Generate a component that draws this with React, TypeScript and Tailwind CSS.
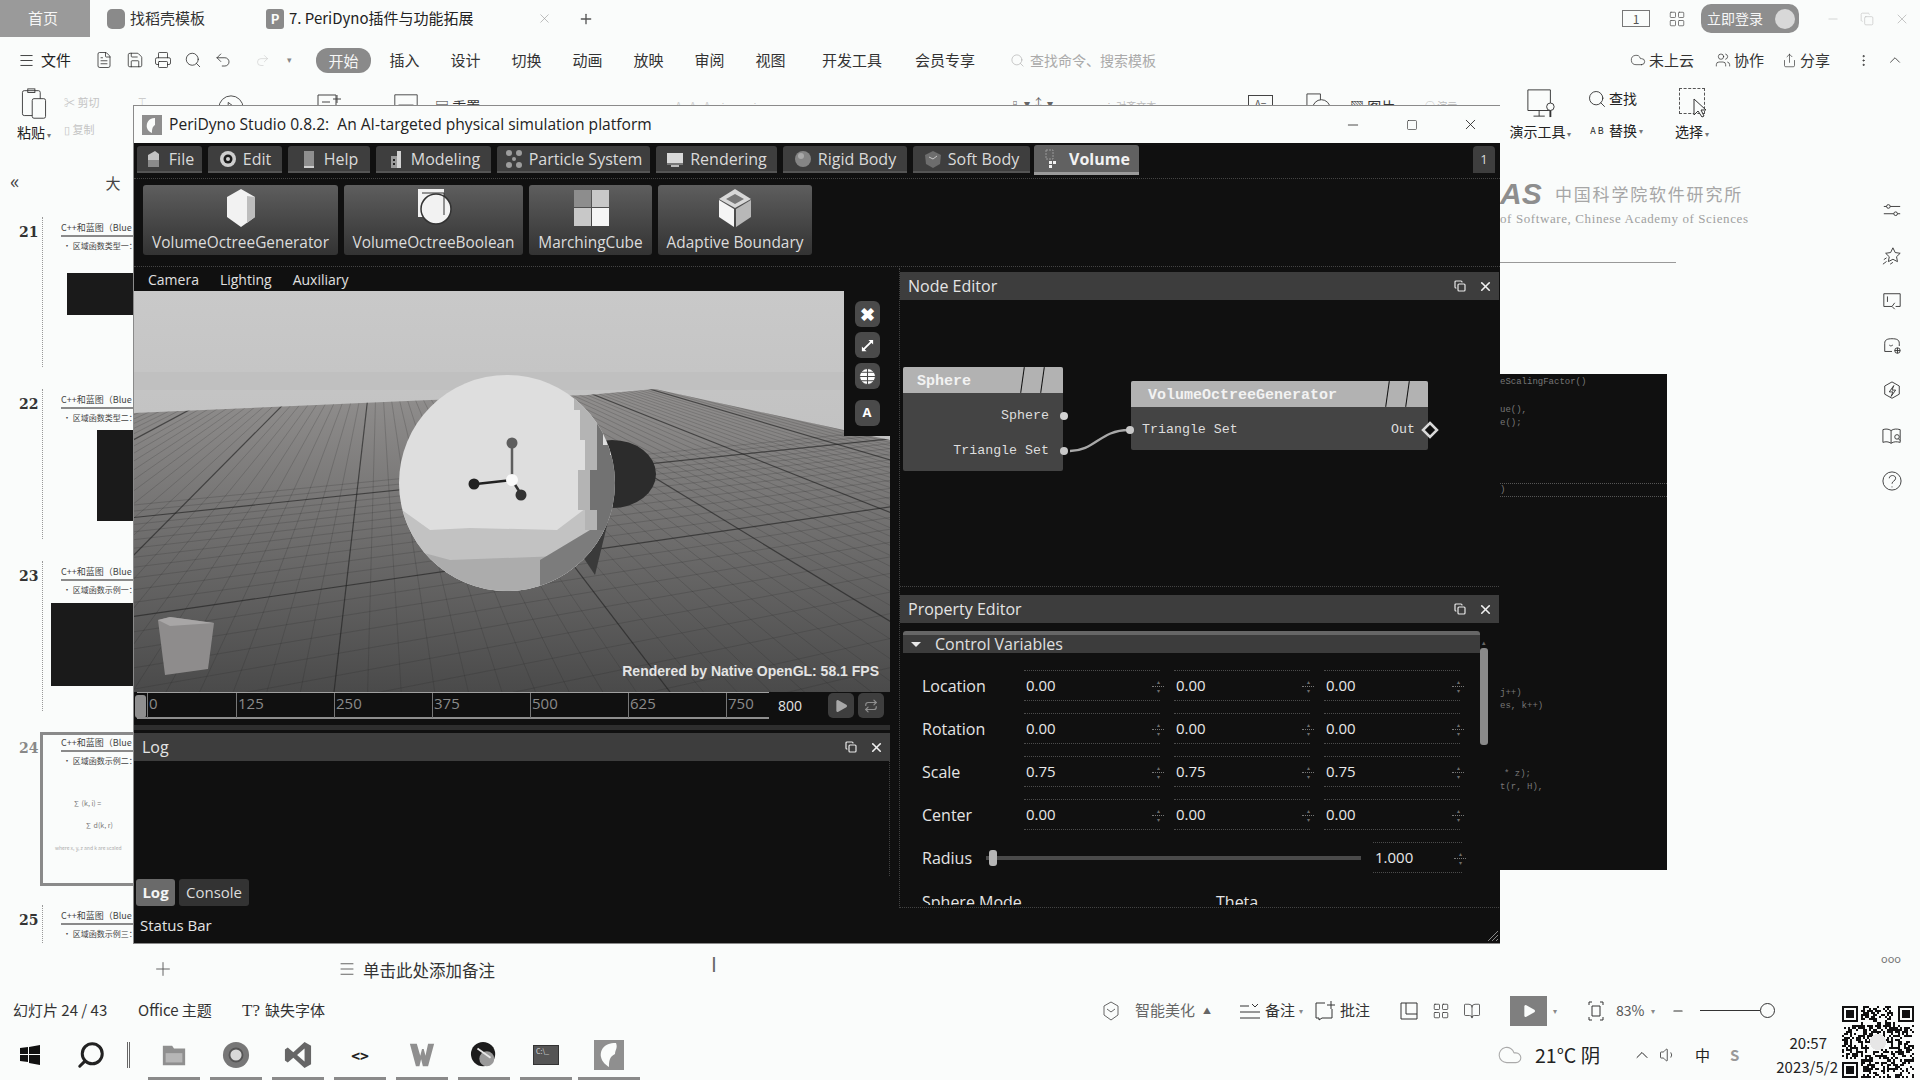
import { useMemo } from "react";
import {
  BookOpen, ChevronUp, CircleHelp, Cloud, Copy, FileText, LayoutGrid, Menu, Minus, MoreVertical,
  Play, Plus, Printer, Repeat, Save, Search, Share, Square, Undo2, Users, Volume1, X,
} from "lucide-react";

const menuTabs = [
  { label: "插入", w: "w-[61px]" },
  { label: "设计", w: "w-[61px]" },
  { label: "切换", w: "w-[61px]" },
  { label: "动画", w: "w-[61px]" },
  { label: "放映", w: "w-[61px]" },
  { label: "审阅", w: "w-[61px]" },
  { label: "视图", w: "w-[61px]" },
  { label: "开发工具", w: "w-[102px]" },
  { label: "会员专享", w: "w-[84px]" },
];

const slides = [
  { n: 21, sub: "• 区域函数类型一：K", block: "ml-[4px] w-[67px] h-[42px] mt-[22px]" },
  { n: 22, sub: "• 区域函数类型二：L", block: "ml-[34px] w-[37px] h-[91px] mt-[7px]" },
  { n: 23, sub: "• 区域函数示例一：K", block: "ml-[-12px] w-[83px] h-[83px] mt-[8px]" },
];

// 3D view: ground grid generated from the two vanishing points read off the picture
const VPA = { x: 378, y: 309 };
const VPB = { x: 2560, y: 265 };

function gridLines() {
  const lines: { d: string; major: boolean }[] = [];
  for (let k = -40; k <= 60; k++) {
    const bx = 334 + k * 33.6;
    const t = (1400 - VPA.y) / (692 - VPA.y);
    const x = VPA.x + (bx - VPA.x) * t;
    lines.push({ d: `M${VPA.x} ${VPA.y}L${x} 1400`, major: k % 10 === 0 });
  }
  for (let k = -12; k <= 36; k++) {
    const inv = 0.00329 - 0.000159 * k;
    const y = 313 + 1 / inv;
    lines.push({ d: `M${VPB.x} ${VPB.y}L0 ${y + (130 / 2430) * (y - VPB.y)}`, major: k % 10 === 0 });
  }
  return lines;
}

function Scene() {
  const lines = useMemo(gridLines, []);
  return (
    <svg viewBox="134 291 756 401" className="block w-[756px] h-[401px]">
      <defs>
        <linearGradient id="sky" x1="0" y1="0" x2="0" y2="1">
          <stop offset="0" stopColor="#c9c9c9" />
          <stop offset="1" stopColor="#b5b5b5" />
        </linearGradient>
        <linearGradient id="ground" gradientUnits="userSpaceOnUse" x1="0" y1="390" x2="0" y2="692">
          <stop offset="0" stopColor="#918f8e" />
          <stop offset="1" stopColor="#4a4a4a" />
        </linearGradient>
        <clipPath id="groundClip">
          <path d="M134 413L430 400L587 395L655 389L890 440V692H134Z" />
        </clipPath>
        <clipPath id="ball">
          <circle cx="507" cy="483" r="108" />
        </clipPath>
      </defs>
      <rect x="134" y="291" width="756" height="401" fill="url(#sky)" />
      <rect x="134" y="372" width="756" height="18" fill="#c0c0c0" />
      <path d="M134 413L430 400L587 395L655 389L890 440V692H134Z" fill="url(#ground)" />
      <g clipPath="url(#groundClip)" fill="none">
        {lines.map((l, i) => (
          <path key={i} d={l.d} stroke="#222" strokeWidth={l.major ? 1.2 : 0.6} opacity={l.major ? 0.65 : 0.32} />
        ))}
      </g>
      <ellipse cx="612" cy="474" rx="44" ry="34" fill="#2c2c2c" />
      <path d="M575 545L612 505L595 575Z" fill="#3a3a3a" />
      <g clipPath="url(#ball)">
        <rect x="395" y="370" width="225" height="230" fill="#dedede" />
        <path d="M395 505L430 530L470 528L557 530L590 505L620 505V600H395Z" fill="#c2c2c2" />
        <path d="M395 545L450 560L560 556L620 520V600H395Z" fill="#acacac" />
        <path d="M540 560L590 530L620 500V600H540Z" fill="#7c7c7c" />
        <path d="M574 380L590 395H597V420H603V445H610V520H597V530H585V510H578V470H585V440H580V410H574Z" fill="#b4b4b4" />
        <path d="M597 420H603V445H610V455H620V530H597V510H590V470H597Z" fill="#727272" />
        <path d="M587 385L600 400L606 425H597V405H590Z" fill="#8e8e8e" />
      </g>
      <path d="M512 480V446" stroke="#5e5e5e" strokeWidth="2.5" />
      <circle cx="512" cy="443" r="5.5" fill="#5e5e5e" />
      <path d="M512 480L476 484" stroke="#222" strokeWidth="2.5" />
      <circle cx="474" cy="484" r="5.5" fill="#222" />
      <path d="M512 480L521 494" stroke="#333" strokeWidth="2.5" />
      <circle cx="521" cy="495" r="5.5" fill="#333" />
      <circle cx="512" cy="480" r="6" fill="#fafafa" />
      <path d="M158 620L170 617L214 623L208 669L165 675Z" fill="#8e8c8c" />
      <path d="M158 620L170 617L214 623L170 626Z" fill="#a8a6a6" />
      <text x="879" y="676" textAnchor="end" fill="#e4e4e4" fontFamily="Liberation Sans" fontWeight="700" fontSize="14">
        Rendered by Native OpenGL: 58.1 FPS
      </text>
    </svg>
  );
}

const ico = "w-[18px] h-[22px] shrink-0";
const FileIco = () => (
  <svg viewBox="0 0 18 22" className={ico}><path d="M3 7l7-4 4 3v13H3z" fill="#c4c4c4" /><path d="M3 12h11v7H3z" fill="#8a8a8a" /></svg>
);
const EditIco = () => (
  <svg viewBox="0 0 18 22" className={ico}><circle cx="9" cy="11" r="8" fill="#cfcfcf" /><circle cx="9" cy="11" r="4.5" fill="#1c1c1c" /><circle cx="9" cy="11" r="2" fill="#cfcfcf" /></svg>
);
const HelpIco = () => (
  <svg viewBox="0 0 18 22" className={ico}><rect x="4" y="3" width="10" height="15" fill="#8f8f8f" /><path d="M4 18h10v2H4z" fill="#d0d0d0" /></svg>
);
const ModelIco = () => (
  <svg viewBox="0 0 18 22" className={ico}><path d="M4 8h6v12H4z" fill="#9a9a9a" /><path d="M10 3h4v17h-4z" fill="#d2d2d2" /><path d="M6 11h2v2H6zM6 15h2v2H6z" fill="#222" /></svg>
);
const ParticleIco = () => (
  <svg viewBox="0 0 18 22" fill="#9d9d9d" className={ico}><circle cx="4" cy="5" r="3" /><circle cx="14" cy="5" r="3" /><circle cx="4" cy="17" r="3" /><circle cx="14" cy="17" r="3" /><circle cx="9" cy="11" r="2" /></svg>
);
const RenderIco = () => (
  <svg viewBox="0 0 18 22" className={ico}><rect x="1" y="5" width="16" height="10" fill="#d8d8d8" /><rect x="1" y="15" width="16" height="2" fill="#777" /><rect x="5" y="17" width="8" height="2" fill="#bbb" /></svg>
);
const RigidIco = () => (
  <svg viewBox="0 0 18 22" className={ico}><circle cx="9" cy="11" r="8" fill="#858585" /><circle cx="7" cy="8" r="3" fill="#a9a9a9" /></svg>
);
const SoftIco = () => (
  <svg viewBox="0 0 18 22" className={ico}><path d="M9 3l8 4-1 9-7 4-7-4-1-9z" fill="#6d6d6d" /><path d="M5 9l4 2 4-3" stroke="#c8c8c8" fill="none" /></svg>
);
const VolumeIco = () => (
  <svg viewBox="0 0 18 22" className={ico}><path d="M3 2h7v9H3z" fill="none" stroke="#999" strokeDasharray="2 1" /><path d="M6 13h3v3H6zM10 13h3v3h-3zM6 17h3v3H6z" fill="#f0f0f0" /></svg>
);

const toolTabs = [
  { label: "File", icon: FileIco, w: "w-[65px]" },
  { label: "Edit", icon: EditIco, w: "w-[74px]" },
  { label: "Help", icon: HelpIco, w: "w-[82px]" },
  { label: "Modeling", icon: ModelIco, w: "w-[115px]" },
  { label: "Particle System", icon: ParticleIco, w: "w-[153px]" },
  { label: "Rendering", icon: RenderIco, w: "w-[121px]" },
  { label: "Rigid Body", icon: RigidIco, w: "w-[124px]" },
  { label: "Soft Body", icon: SoftIco, w: "w-[117px]" },
];

function DockHeader({ title }: { title: string }) {
  return (
    <div className="flex items-center h-[28px] bg-[#3d3d3d] pl-[8px] pr-[6px] text-[16px] text-[#e4e4e4] shrink-0">
      <span className="flex-1">{title}</span>
      <Copy size={12} strokeWidth={2.4} className="mr-[12px] text-[#e8e8e8]" />
      <X size={15} strokeWidth={2.6} className="text-[#f0f0f0]" />
    </div>
  );
}

function Spin() {
  return (
    <span className="absolute right-[-4px] top-[7px] flex flex-col items-center text-[#6d6d6d] text-[6px] leading-[8px]">
      <span>▴</span>
      <span className="w-[12px] border-t border-dotted border-[#777]" />
      <span>▾</span>
    </span>
  );
}

function NumField({ value }: { value: string }) {
  return (
    <div className="relative w-[136px] h-[31px] mr-[14px] border-y border-dotted border-[#4c4c4c] pl-[2px] leading-[29px] text-[15px] text-[#e8e8e8]">
      {value}
      <Spin />
    </div>
  );
}

const vectorRows = [
  { label: "Location", value: "0.00" },
  { label: "Rotation", value: "0.00" },
  { label: "Scale", value: "0.75" },
  { label: "Center", value: "0.00" },
];

function NodeHeader({ title, left }: { title: string; left: string }) {
  return (
    <div className={`relative h-[26px] bg-[#b2b2b2] rounded-t-[2px] font-bold text-[15px] leading-[30px] text-[#f2f2f2] overflow-hidden ${left}`}>
      {title}
      <span className="absolute top-0 right-[20px] h-[26px] w-px bg-[#101010] rotate-[8deg]" />
      <span className="absolute top-0 right-[40px] h-[26px] w-px bg-[#101010] rotate-[8deg]" />
    </div>
  );
}

function NodeEditor() {
  return (
    <div className="relative h-[286px] shrink-0 bg-[#101010] font-['Liberation_Mono',monospace] text-[13.3px] text-[#dedede]">
      <div className="absolute left-[3px] top-[67px] w-[160px] h-[104px] bg-[#444] rounded-[2px]">
        <NodeHeader title="Sphere" left="pl-[14px]" />
        <div className="absolute right-[14px] top-[39px]">Sphere</div>
        <div className="absolute right-[14px] top-[74px]">Triangle Set</div>
      </div>
      <div className="absolute left-[231px] top-[81px] w-[297px] h-[69px] bg-[#444] rounded-[2px]">
        <NodeHeader title="VolumeOctreeGenerator" left="pl-[17px]" />
        <div className="absolute left-[11px] top-[39px]">Triangle Set</div>
        <div className="absolute right-[13px] top-[39px]">Out</div>
      </div>
      <svg viewBox="0 0 600 286" className="absolute inset-0 w-[600px] h-[286px] pointer-events-none">
        <path d="M170 151C195 151 200 130 229 130" fill="none" stroke="#a8a8a8" strokeWidth="2.4" />
        <circle cx="164" cy="116" r="4" fill="#d2d2d2" />
        <circle cx="164" cy="151" r="4" fill="#c8c8c8" />
        <circle cx="230" cy="130" r="4" fill="#c8c8c8" />
        <path d="M530 123l7 7-7 7-7-7z" fill="#101010" stroke="#d8d8d8" strokeWidth="2.5" />
      </svg>
    </div>
  );
}

function PropertyEditor() {
  return (
    <div className="relative flex-1 min-h-0 overflow-hidden bg-[#101010] pt-[8px] pl-[3px] text-[16px] text-[#e4e4e4]">
      <div className="w-[577px] h-[22px] bg-[#3c3c3c] border-t-[4px] border-[#666] rounded-t-[3px] flex items-center">
        <span className="ml-[8px] w-0 h-0 border-x-[5px] border-x-transparent border-t-[5px] border-t-[#e8e8e8]" />
        <span className="ml-[14px] text-[#e0e0e0]">Control Variables</span>
      </div>
      <div className="mt-[11px]">
        {vectorRows.map((r) => (
          <div key={r.label} className="flex items-center h-[43px] pl-[19px]">
            <span className="w-[102px]">{r.label}</span>
            <NumField value={r.value} />
            <NumField value={r.value} />
            <NumField value={r.value} />
          </div>
        ))}
        <div className="flex items-center h-[43px] pl-[19px]">
          <span className="w-[64px]">Radius</span>
          <div className="relative w-[375px] h-[4px] bg-[#4a4a4a]">
            <span className="absolute left-[3px] top-[-6px] w-[8px] h-[16px] rounded-[3px] bg-[#b5b5b5]" />
          </div>
          <div className="relative ml-[12px] w-[89px] h-[31px] border-y border-dotted border-[#4c4c4c] pl-[2px] text-[15px] leading-[29px] text-[#e8e8e8]">
            1.000
            <Spin />
          </div>
        </div>
        <div className="flex items-center h-[43px] pl-[19px] pt-[2px]">
          <span className="w-[294px]">Sphere Mode</span>
          <span>Theta</span>
        </div>
      </div>
      <div className="absolute right-[11px] top-[16px] bottom-0 w-[9px] flex flex-col items-center text-[#666] text-[7px] leading-[8px]">
        <span>▴</span>
        <span className="w-[8px] h-[97px] mt-[1px] rounded-[3px] bg-[#8a8a8a]" />
      </div>
    </div>
  );
}

function ViewportTool({ children }: { children: React.ReactNode }) {
  return (
    <span className="w-[25px] h-[26px] rounded-[6px] bg-[#4a4a4a] flex items-center justify-center text-white">
      {children}
    </span>
  );
}

function ActionButton({ w, label, children }: { w: string; label: string; children: React.ReactNode }) {
  return (
    <div className={`${w} rounded-[3px] bg-gradient-to-b from-[#5e5e5e] to-[#333] flex flex-col items-center pt-[3px]`}>
      {children}
      <span className="mt-[3px]">{label}</span>
    </div>
  );
}

function StudioWindow() {
  return (
    <div className="absolute left-[133px] top-[105px] w-[1367px] h-[839px] flex flex-col bg-[#101010] border-t border-l border-b border-[#8a8a8a] font-['Open_Sans',sans-serif]">
      <div className="h-[37px] bg-[#fafcfb] flex items-center shrink-0 text-[#222]">
        <svg viewBox="0 0 20 20" className="ml-[8px] w-[20px] h-[20px]">
          <rect width="20" height="20" fill="#8e8e8e" />
          <path d="M13 3C6 3 4 9 5 13c1 3 3 4 5 5 0-3 0-6 3-8z" fill="#fafcfb" />
        </svg>
        <span className="ml-[7px] flex-1 text-[15.6px]">PeriDyno Studio 0.8.2:&nbsp; An AI-targeted physical simulation platform</span>
        <Minus size={16} strokeWidth={1.2} className="mr-[45px]" />
        <Square size={12} strokeWidth={1.2} className="mr-[44px]" />
        <X size={17} strokeWidth={1.2} className="mr-[21px]" />
      </div>
      <div className="relative h-[36px] shrink-0 pt-[3px] pl-[3px] flex gap-[6px] text-[16px] text-[#dadada] border-b border-dotted border-[#444] mb-[6px]">
        {toolTabs.map((t) => (
          <div key={t.label} className={`${t.w} h-[27px] rounded-t-[3px] bg-[#3e3e3e] border-b-2 border-[#555] flex items-center justify-center gap-[6px]`}>
            <t.icon />
            {t.label}
          </div>
        ))}
        <div className="w-[105px] h-[30px] -mt-[1px] -ml-[2px] rounded-t-[3px] bg-[#616161] border-b-[3px] border-[#9a9a9a] flex items-center justify-center gap-[8px] font-bold text-[#f2f2f2]">
          <VolumeIco />
          Volume
        </div>
        <span className="absolute right-[5px] top-[3px] w-[22px] h-[27px] rounded-t-[4px] bg-[#3e3e3e] text-center text-[13px] leading-[27px]">1</span>
      </div>
      <div className="h-[70px] shrink-0 pl-[9px] flex gap-[6px] text-[15.4px] text-[#dcdcdc]">
        <ActionButton w="w-[195px]" label="VolumeOctreeGenerator">
          <svg viewBox="0 0 36 40" className="w-[36px] h-[40px]"><path d="M18 1l14 8v20L18 39 4 29V9z" fill="#f2f2f2" /><path d="M24 8l8 1v20l-8 6z" fill="#bdbdbd" /></svg>
        </ActionButton>
        <ActionButton w="w-[179px]" label="VolumeOctreeBoolean">
          <svg viewBox="0 0 36 40" className="w-[36px] h-[40px]"><rect x="2" y="1" width="26" height="28" fill="#f2f2f2" /><circle cx="20" cy="21" r="15" fill="#f2f2f2" stroke="#333" strokeWidth="1.5" /><path d="M6 5h22v22" fill="none" stroke="#333" strokeWidth="1" /></svg>
        </ActionButton>
        <ActionButton w="w-[123px]" label="MarchingCube">
          <svg viewBox="0 0 36 40" className="w-[36px] h-[40px]"><rect x="1" y="2" width="17" height="17" fill="#8d8d8d" /><rect x="19" y="2" width="17" height="17" fill="#c8c8c8" /><rect x="1" y="20" width="17" height="18" fill="#c8c8c8" /><rect x="19" y="20" width="17" height="18" fill="#f5f5f5" /></svg>
        </ActionButton>
        <ActionButton w="w-[154px]" label="Adaptive Boundary">
          <svg viewBox="0 0 36 40" className="w-[36px] h-[40px]"><path d="M18 1l16 10-16 9L2 11z" fill="#d8d8d8" /><path d="M18 6l9 5-9 5-9-5z" fill="#777" /><path d="M2 12l15 9v18L2 29z" fill="#f5f5f5" /><path d="M34 12l-15 9v18l15-10z" fill="#b8b8b8" /></svg>
        </ActionButton>
      </div>
      <div className="h-[12px] shrink-0 border-b border-dotted border-[#444] mb-[1px]" />
      <div className="flex-1 min-h-0 flex">
        <div className="w-[756px] shrink-0 flex flex-col">
          <div className="h-[23px] shrink-0 flex items-center pl-[14px] gap-[21px] text-[14px] text-[#e0e0e0]">
            <span>Camera</span>
            <span>Lighting</span>
            <span>Auxiliary</span>
          </div>
          <div className="relative h-[401px] shrink-0">
            <Scene />
            <div className="absolute right-0 top-0 w-[46px] h-[145px] bg-[#101010] flex flex-col items-center pt-[10px] gap-[5px]">
              <ViewportTool><span className="text-[18px] font-bold leading-none">✖</span></ViewportTool>
              <ViewportTool>
                <svg viewBox="0 0 16 16" className="w-[15px] h-[15px]" stroke="#fff" strokeWidth="2" fill="#fff"><path d="M3 13L13 3" /><path d="M9 2h5v5zM2 9v5h5z" strokeWidth="0" /></svg>
              </ViewportTool>
              <ViewportTool>
                <svg viewBox="0 0 16 16" className="w-[17px] h-[17px]" fill="#fff" stroke="#4a4a4a" strokeWidth="1"><circle cx="8" cy="8" r="7.5" /><path d="M0 8h16M8 0v16M2 4h12M2 12h12" fill="none" /></svg>
              </ViewportTool>
              <span className="mt-[6px]"><ViewportTool><span className="text-[13px] font-bold">A</span></ViewportTool></span>
            </div>
          </div>
          <div className="h-[30px] shrink-0 flex items-start pl-[3px]">
            <div className="relative w-[632px] h-[27px] border-t border-[#a0a0a0] border-b-2 border-b-[#8e8e8e] text-[15px] text-[#8a8a8a]">
              <span className="absolute left-[-2px] top-[2px] w-[11px] h-[23px] rounded-[3px] bg-[#8f8f8f]" />
              {[0, 125, 250, 375, 500, 625, 750].map((v, i) => (
                <span key={v} className="absolute top-0 h-[25px] border-l border-[#777] pl-[1px] leading-[20px] first:border-l-0 first:pl-0" style={{ left: i === 0 ? 10 : i * 98 + 1 }}>
                  {v}
                </span>
              ))}
            </div>
            <span className="ml-[9px] mt-[3px] text-[14px] text-[#e4e4e4]">800</span>
            <span className="ml-[26px] mt-[1px] w-[26px] h-[25px] rounded-[5px] bg-[#3e3e3e] flex items-center justify-center">
              <Play size={16} fill="#a8a8a8" strokeWidth={0} />
            </span>
            <span className="ml-[4px] mt-[1px] w-[26px] h-[25px] rounded-[5px] bg-[#3e3e3e] flex items-center justify-center text-[#8f8f8f]">
              <Repeat size={14} />
            </span>
          </div>
          <div className="h-[11px] shrink-0 flex items-center">
            <span className="w-full h-[5px] bg-[#2e2e2e]" />
          </div>
          <div className="shrink-0"><DockHeader title="Log" /></div>
          <div className="flex-1 min-h-0 border-r border-dotted border-[#444]" />
          <div className="h-[32px] shrink-0 flex items-start gap-[4px] pt-[3px] pl-[2px] text-[15px]">
            <span className="w-[39px] h-[27px] rounded-[3px] bg-[#6a6a6a] text-center font-bold text-[#f4f4f4] leading-[27px]">Log</span>
            <span className="w-[70px] h-[27px] rounded-[3px] bg-[#333] text-center text-[#dcdcdc] leading-[27px]">Console</span>
          </div>
        </div>
        <div className="w-[600px] ml-[9px] shrink-0 flex flex-col pt-[4px] border-l border-dotted border-[#444]">
          <DockHeader title="Node Editor" />
          <NodeEditor />
          <div className="h-[9px] shrink-0 border-t border-dotted border-[#444]" />
          <DockHeader title="Property Editor" />
          <PropertyEditor />
          <div className="h-[3px] shrink-0 border-b border-dotted border-[#444]" />
        </div>
      </div>
      <div className="relative h-[35px] shrink-0 pl-[6px] flex items-center text-[15px] text-[#e4e4e4]">
        Status Bar
        <svg viewBox="0 0 12 12" className="absolute right-[2px] bottom-[2px] w-[12px] h-[12px]" stroke="#888" fill="none"><path d="M12 2L2 12M12 6l-6 6M12 10l-2 2" /></svg>
      </div>
    </div>
  );
}

function Thumb({ n, sub, block }: { n: number; sub: string; block: string }) {
  return (
    <div className="relative h-[172px] pl-[42px] pt-[1px]">
      <span className="absolute left-[19px] top-[6px] font-['DejaVu_Serif',serif] font-bold text-[14px] text-[#333]">{n}</span>
      <div className="h-[150px] border-l border-dotted border-[#999] pl-[20px] overflow-hidden whitespace-nowrap">
        <div className="mt-[5px] text-[9px] leading-[12px] text-[#444] border-b-2 border-[#8a8a8a] pb-[1px] -ml-[2px]">C++和蓝图（Blue</div>
        <div className="mt-[3px] text-[8px] leading-[11px] text-[#444]">{sub}</div>
        <div className={`${block} bg-[#1a1a1a]`} />
      </div>
    </div>
  );
}

function Ribbon() {
  return (
    <div className="h-[72px] shrink-0 flex items-start pt-[5px] text-[#555] whitespace-nowrap">
      <div className="ml-[14px] w-[40px] shrink-0 flex flex-col items-center">
        <svg viewBox="0 0 30 36" className="w-[28px] h-[32px]" fill="none" stroke="#333"><rect x="2" y="3" width="20" height="28" rx="2" /><rect x="8" y="1" width="8" height="4" /><rect x="13" y="12" width="15" height="22" rx="2" fill="#fafcfb" /></svg>
        <span className="mt-[2px] text-[14px] text-[#222]">粘贴<span className="text-[8px] text-[#777]"> ▾</span></span>
      </div>
      <div className="ml-[10px] w-[64px] shrink-0 pt-[6px] flex flex-col gap-[10px] text-[11px] text-[#c4c4c4]">
        <span>✂ 剪切</span>
        <span>▯ 复制</span>
      </div>
      <span className="ml-[10px] w-[22px] shrink-0 mt-[4px] text-[14px] text-[#ccc]">⌶</span>
      <svg viewBox="0 0 30 30" className="ml-[57px] mt-[6px] w-[28px] h-[28px] shrink-0" fill="none" stroke="#444"><circle cx="15" cy="15" r="13" /><path d="M12 9l8 6-8 6z" /></svg>
      <svg viewBox="0 0 30 30" className="ml-[70px] mt-[4px] w-[30px] h-[30px] shrink-0" fill="none" stroke="#444"><path d="M3 3h18v24H3zM7 10h8M7 17h10M22 3v8M18 7h8" /></svg>
      <svg viewBox="0 0 30 30" className="ml-[47px] mt-[4px] w-[28px] h-[28px] shrink-0" fill="none" stroke="#444"><path d="M3 3h24v24H3zM7 14h16" /></svg>
      <span className="ml-[15px] w-[55px] shrink-0 mt-[8px] text-[14px] text-[#333]">▤ 重置</span>
      <span className="ml-[159px] w-[306px] shrink-0 mt-[10px] text-[10px] text-[#ccc] tracking-[3px] overflow-hidden">▾ ▾ A A A ⋮ ▾ ⋮ ▾ - ▾ ▾ ▾ ▾ - - ▾ ▾ ▾ ▾</span>
      <span className="ml-[54px] w-[64px] shrink-0 mt-[6px] text-[12px] text-[#666]">▫ ▾ ↕ ▾</span>
      <span className="ml-[31px] w-[95px] shrink-0 mt-[10px] text-[10px] text-[#bbb]">⋮ 对齐文本 ▾</span>
      <span className="ml-[49px] w-[25px] h-[22px] shrink-0 mt-[7px] border border-[#444] text-[10px] text-center">A=</span>
      <svg viewBox="0 0 28 28" className="ml-[32px] mt-[4px] w-[27px] h-[27px] shrink-0" fill="none" stroke="#444"><path d="M2 2h14v16H2z" /><circle cx="17" cy="17" r="9" fill="#fafcfb" /></svg>
      <span className="ml-[18px] w-[65px] shrink-0 mt-[8px] text-[14px] text-[#333]">▧ 图片<span className="text-[8px] text-[#777]"> ▾</span></span>
      <span className="ml-[10px] w-[65px] shrink-0 mt-[10px] text-[10px] text-[#bbb]">○ 演示 ▾</span>
      <div className="ml-[18px] w-[65px] shrink-0 flex flex-col items-center">
        <svg viewBox="0 0 32 32" className="w-[30px] h-[30px]" fill="none" stroke="#333"><path d="M2 2h24v22H2zM14 24v6M8 30h12" /><circle cx="26" cy="20" r="4" fill="#fafcfb" /><path d="M26 24v7" strokeWidth="2" /></svg>
        <span className="mt-[3px] text-[14px] text-[#222]">演示工具<span className="text-[8px] text-[#777]"> ▾</span></span>
      </div>
      <div className="ml-[14px] w-[60px] shrink-0 flex flex-col gap-[11px] text-[14px] text-[#222]">
        <span className="flex items-center gap-[2px]"><Search size={20} strokeWidth={1} />查找</span>
        <span className="flex items-center gap-[2px]"><span className="w-[20px] text-[9px] leading-[9px] text-center">A B</span>替换<span className="text-[8px] text-[#777]">▾</span></span>
      </div>
      <div className="ml-[25px] w-[40px] shrink-0 flex flex-col items-center">
        <span className="relative w-[26px] h-[26px] border border-dashed border-[#555]">
          <svg viewBox="0 0 16 20" className="absolute left-[12px] top-[9px] w-[16px] h-[20px]" fill="#fafcfb" stroke="#333"><path d="M2 1v16l4-4 4 6 2-1-3-6h5z" /></svg>
        </span>
        <span className="mt-[7px] text-[14px] text-[#222]">选择<span className="text-[8px] text-[#777]"> ▾</span></span>
      </div>
    </div>
  );
}

const codeLines = [
  { t: "eScalingFactor()", m: "mt-[2px]" },
  { t: "ue(),", m: "mt-[16px]" },
  { t: "e();", m: "mt-[1px]" },
  { t: ")", m: "mt-[54px] border-y border-dotted border-[#555]" },
  { t: "j++)", m: "mt-[190px]" },
  { t: "es, k++)", m: "mt-[1px]" },
  { t: "* z);", m: "mt-[56px] pl-[4px]" },
  { t: "t(r, H),", m: "mt-[1px]" },
];

// right-hand task pane icons
const railPaths = [
  "M2 6h3M9 6h11M2 14h11M17 14h3M5 6a2 2 0 1 0 4 0a2 2 0 1 0-4 0M13 14a2 2 0 1 0 4 0a2 2 0 1 0-4 0",
  "M12 2l2.5 5.2 5.5.8-4 3.8 1 5.4-5-2.6-5 2.6 1-5.4-4-3.8 5.5-.8zM2 15l3-2M1 20l4-3M9 20l3-2",
  "M2 3h18v14h-5M2 3v14h9M14 13l-3 4 3 3M6 6v6",
  "M3 8c0-4 3-5 8-5s8 1 8 5v3M3 8v9h8M8 10c2 2 3 0 4 0M14 16a3 3 0 1 0 6 0a3 3 0 1 0-6 0M17 13v6M14 16h6",
  "M11 1l8 4.5v9L11 19l-8-4.5v-9zM13 5l-5 7h4l-2 5 5-7h-4z",
  "M1 4c3-1 6-1 9 1v14c-3-2-6-2-9-1zM10 5c3-2 6-2 10-1v14c-4-1-7-1-10 1M14 12a2.5 2.5 0 1 0 5 0a2.5 2.5 0 1 0-5 0M18 14l2 2",
  "M1 11a10 10 0 1 0 20 0a10 10 0 1 0-20 0M8 8c0-4 7-4 7 0 0 3-4 3-4 6M11 17v1",
];

const tray = [
  { w: "w-[52px]", mr: "mr-[10px]", el: <svg viewBox="0 0 28 28" className="w-[28px] h-[26px]"><path d="M2 4h10l2 3h12v18H2z" fill="#8f8f8f" /><path d="M5 12h18v10H5z" fill="#b6b6b6" /></svg> },
  { w: "w-[52px]", mr: "mr-[10px]", el: <svg viewBox="0 0 30 30" className="w-[28px] h-[28px]"><circle cx="15" cy="15" r="14" fill="#777" /><circle cx="15" cy="15" r="7" fill="#d8d8d8" stroke="#555" strokeWidth="2" /></svg> },
  { w: "w-[52px]", mr: "mr-[10px]", el: <svg viewBox="0 0 30 30" className="w-[28px] h-[28px]"><path d="M22 1l7 4v20l-7 4-12-11-6 5-3-2V9l3-2 6 5z" fill="#666" /><path d="M22 8v14l-8-7z" fill="#fafcfb" /></svg> },
  { w: "w-[52px]", mr: "mr-[10px]", el: <span className="text-[15px] font-bold text-[#222] leading-none">&lt;&gt;</span> },
  { w: "w-[52px]", mr: "mr-[10px]", el: <svg viewBox="0 0 30 30" className="w-[30px] h-[26px]"><path d="M1 2h8l4 14 2-8h2l2 8 3-14h7l-7 26h-6l-2-8-2 8H8z" fill="#8f8f8f" /></svg> },
  { w: "w-[52px]", mr: "mr-[10px]", el: <svg viewBox="0 0 30 30" className="w-[28px] h-[28px]"><circle cx="14" cy="14" r="13" fill="#1c1c1c" /><circle cx="18" cy="19" r="8" fill="#9a9a9a" /><path d="M8 8l14 10" stroke="#e8e8e8" strokeWidth="2" /></svg> },
  { w: "w-[52px]", mr: "mr-[6px]", el: <span className="w-[26px] h-[20px] bg-[#555] border border-[#333] text-[7px] text-[#ddd] leading-[10px] pl-[2px]">C:\_</span> },
  { w: "w-[62px]", mr: "", el: <svg viewBox="0 0 30 30" className="w-[30px] h-[30px]"><rect width="30" height="30" fill="#8f8f8f" /><path d="M22 3C9 3 6 11 7 17c1 5 5 8 8 10 0-5 0-10 6-13 0-4 3-6 1-11z" fill="#fafcfb" /></svg> },
];

function QrCode() {
  const cells = useMemo(() => {
    const out: [number, number][] = [];
    let seed = 7;
    for (let y = 0; y < 35; y++) {
      for (let x = 0; x < 35; x++) {
        seed = (seed * 1103515245 + 12345) & 0x7fffffff;
        const inFinder = (x < 9 && y < 9) || (x > 25 && y < 9) || (x < 9 && y > 25);
        if (!inFinder && seed % 100 < 48) out.push([x, y]);
      }
    }
    return out;
  }, []);
  const finder = (x: number, y: number) => (
    <g key={`${x}-${y}`}>
      <rect x={x} y={y} width="8" height="8" />
      <rect x={x + 1} y={y + 1} width="6" height="6" fill="#fafcfb" />
      <rect x={x + 2} y={y + 2} width="4" height="4" />
    </g>
  );
  return (
    <svg viewBox="0 0 35 35" shapeRendering="crispEdges" className="w-[72px] h-[74px]" fill="#111">
      {cells.map(([x, y]) => (
        <rect key={`${x}_${y}`} x={x} y={y} width="1" height="1" />
      ))}
      <circle cx="17.5" cy="17.5" r="4" fill="#e6e6e6" />
      {finder(0, 0)}
      {finder(27, 0)}
      {finder(0, 27)}
    </svg>
  );
}

export default function App() {
  return (
    <div className="relative w-[1920px] h-[1080px] overflow-hidden flex flex-col bg-[#fafcfb] text-[#222] font-['Noto_Sans_CJK_SC','Noto_Sans',sans-serif]">
      {/* tab strip */}
      <div className="h-[37px] shrink-0 flex items-center text-[15px] whitespace-nowrap">
        <div className="w-[90px] h-[37px] bg-[#9a9a9a] text-[#f6f6f6] flex items-center justify-center pr-[4px]">首页</div>
        <span className="ml-[17px] w-[18px] h-[20px] rounded-[5px] bg-[#8a8a8a]" />
        <span className="ml-[5px] w-[136px] text-[#333]">找稻壳模板</span>
        <span className="w-[18px] h-[20px] rounded-[3px] bg-[#8a8a8a] text-[#fafcfb] text-center text-[13px] leading-[20px] font-bold">P</span>
        <span className="ml-[5px] w-[248px] text-[#222]">7. PeriDyno插件与功能拓展</span>
        <X size={15} strokeWidth={1} className="text-[#999]" />
        <Plus size={16} strokeWidth={2} className="ml-[26px] text-[#555]" />
        <span className="flex-1" />
        <span className="w-[28px] h-[17px] border border-[#777] text-[12px] leading-[15px] text-center text-[#555]">1</span>
        <LayoutGrid size={18} strokeWidth={1} className="ml-[18px] text-[#555]" />
        <div className="ml-[15px] w-[98px] h-[29px] rounded-[10px] bg-[#8e8e8e] text-[#f6f6f6] text-[14px] flex items-center justify-between pl-[6px] pr-[4px]">
          立即登录
          <span className="w-[20px] h-[20px] rounded-full bg-[#d8d8d8]" />
        </div>
        <Minus size={14} strokeWidth={1} className="ml-[27px] text-[#bbb]" />
        <Copy size={14} strokeWidth={1} className="ml-[20px] text-[#bbb]" />
        <X size={16} strokeWidth={1} className="ml-[20px] mr-[10px] text-[#aaa]" />
      </div>
      {/* menu row */}
      <div className="h-[46px] shrink-0 flex items-center text-[15px] whitespace-nowrap">
        <Menu size={17} strokeWidth={1.2} className="ml-[18px]" />
        <span className="ml-[6px] w-[30px]">文件</span>
        <FileText size={18} strokeWidth={1} className="ml-[24px]" />
        <Save size={18} strokeWidth={1} className="ml-[13px]" />
        <Printer size={18} strokeWidth={1} className="ml-[10px]" />
        <Search size={18} strokeWidth={1} className="ml-[12px]" />
        <Undo2 size={18} strokeWidth={1} className="ml-[12px]" />
        <Undo2 size={15} strokeWidth={1} className="ml-[23px] -scale-x-100 text-[#ccc]" />
        <span className="ml-[17px] w-[8px] text-[#888] text-[9px]">▾</span>
        <span className="ml-[21px] w-[55px] h-[25px] rounded-[12px] bg-[#8a8a8a] text-[#f6f6f6] text-center leading-[25px] mr-[3px]">开始</span>
        {menuTabs.map((m) => (
          <span key={m.label} className={`${m.w} text-center text-[#333]`}>{m.label}</span>
        ))}
        <Search size={15} strokeWidth={1} className="ml-[23px] text-[#aaa]" />
        <span className="ml-[5px] text-[14px] text-[#aaa]">查找命令、搜索模板</span>
        <span className="flex-1" />
        <Cloud size={16} strokeWidth={1} />
        <span className="ml-[3px] text-[#333]">未上云</span>
        <Users size={16} strokeWidth={1} className="ml-[21px]" />
        <span className="ml-[3px] text-[#333]">协作</span>
        <Share size={15} strokeWidth={1} className="ml-[18px]" />
        <span className="ml-[3px] text-[#333]">分享</span>
        <MoreVertical size={15} strokeWidth={1.2} className="ml-[26px]" />
        <ChevronUp size={18} strokeWidth={1} className="ml-[15px] mr-[16px]" />
      </div>
      <Ribbon />
      {/* work area */}
      <div className="flex-1 min-h-0 flex">
        <div className="w-[133px] shrink-0 overflow-hidden">
          <div className="h-[61px] pl-[10px] pt-[14px] text-[#444] flex items-start">
            <span className="text-[20px] leading-[24px]">«</span>
            <span className="ml-[86px] mt-[3px] text-[15px]">大</span>
          </div>
          {slides.map((s) => (
            <Thumb key={s.n} n={s.n} sub={s.sub} block={s.block} />
          ))}
          <div className="relative h-[172px] pl-[40px]">
            <span className="absolute left-[19px] top-[6px] font-['DejaVu_Serif',serif] font-bold text-[14px] text-[#888]">24</span>
            <div className="h-[154px] border-[3px] border-r-0 border-[#8a8a8a] pl-[20px] overflow-hidden whitespace-nowrap">
              <div className="mt-[2px] text-[9px] leading-[12px] text-[#444] border-b-2 border-[#8a8a8a] pb-[1px] -ml-[2px]">C++和蓝图（Blue</div>
              <div className="mt-[3px] text-[8px] leading-[11px] text-[#444]">• 区域函数示例二：K</div>
              <div className="mt-[26px] ml-[10px] text-[7px] leading-[22px] text-[#777]">∑ (k, i) =</div>
              <div className="ml-[22px] text-[7px] leading-[22px] text-[#777]">∑ d(k, r)</div>
              <div className="mt-[8px] -ml-[8px] text-[5px] text-[#aaa]">where x, y, z and k are scaled</div>
            </div>
          </div>
          <Thumb n={25} sub="• 区域函数示例三：K" block="hidden" />
        </div>
        {/* slide behind the simulation window */}
        <div className="w-[1367px] shrink-0 pl-[1367px] -mr-[200px]">
          <div className="w-[260px] pt-[27px] whitespace-nowrap">
            <div className="flex items-center h-[24px] text-[#999]">
              <span className="w-[55px] font-['Liberation_Sans',sans-serif] font-bold italic text-[30px] leading-none text-[#8e8e8e]">AS</span>
              <span className="font-['Noto_Sans_CJK_SC',serif] text-[17px] tracking-[1.8px] text-[#a6a6a6]">中国科学院软件研究所</span>
            </div>
            <div className="mt-[3px] font-['Liberation_Serif',serif] text-[13px] text-[#a0a0a0] tracking-[0.6px]">of Software, Chinese Academy of Sciences</div>
            <div className="mt-[33px] w-[176px] border-t border-[#999]" />
            <div className="mt-[111px] w-[167px] h-[496px] bg-[#101010] overflow-hidden font-['Liberation_Mono',monospace] text-[9px] leading-[12px] text-[#777]">
              {codeLines.map((c) => (
                <div key={c.t} className={c.m}>{c.t}</div>
              ))}
            </div>
          </div>
        </div>
        <div className="ml-auto w-[38px] pt-[46px] flex flex-col items-start gap-[25px] text-[#333]">
          {railPaths.map((d, i) => (
            <svg key={i} viewBox="0 0 22 22" className="w-[20px] h-[20px]" fill="none" stroke="currentColor" strokeWidth="1"><path d={d} /></svg>
          ))}
        </div>
      </div>
      {/* notes row */}
      <div className="h-[50px] shrink-0 flex items-center text-[16.5px] text-[#333] relative">
        <Plus size={22} strokeWidth={1} className="ml-[152px] text-[#555]" />
        <Menu size={18} strokeWidth={1} className="ml-[164px]" />
        <span className="ml-[7px] mt-[3px]">单击此处添加备注</span>
        <span className="ml-[216px] -mt-[10px] text-[#666] text-[20px]">I</span>
        <span className="absolute right-[19px] top-[6px] text-[#777] text-[11px]">ooo</span>
      </div>
      {/* status row */}
      <div className="h-[36px] shrink-0 pb-[3px] flex items-center text-[15px] text-[#333] whitespace-nowrap">
        <span className="ml-[13px] w-[98px]">幻灯片 24 / 43</span>
        <span className="ml-[27px] w-[77px]">Office 主题</span>
        <span className="ml-[27px] w-[20px] font-['Liberation_Serif',serif] text-[17px] leading-none">T?</span>
        <span className="ml-[3px] w-[60px]">缺失字体</span>
        <svg viewBox="0 0 16 20" className="ml-[778px] w-[16px] h-[20px] shrink-0" fill="none" stroke="#666"><path d="M8 1l7 4v9l-7 5-7-5V5zM4 8l4 3 4-3" /></svg>
        <span className="ml-[16px] w-[60px] text-[#666]">智能美化</span>
        <span className="ml-[8px] w-[8px] text-[8px] text-[#666]">▲</span>
        <svg viewBox="0 0 20 18" className="ml-[29px] w-[20px] h-[18px] shrink-0" fill="none" stroke="#333"><path d="M0 4h9M0 10h20M0 16h20M12 2l3 3 3-3" /></svg>
        <span className="ml-[5px] w-[30px]">备注</span>
        <span className="ml-[4px] w-[8px] text-[8px] text-[#888]">▾</span>
        <svg viewBox="0 0 20 20" className="ml-[8px] w-[20px] h-[20px] shrink-0" fill="none" stroke="#333"><path d="M10 2H1v15h3v2l3-2h10V8M16 0v8M12 4h8" /></svg>
        <span className="ml-[5px] w-[30px]">批注</span>
        <svg viewBox="0 0 18 18" className="ml-[30px] w-[18px] h-[18px] shrink-0" fill="none" stroke="#333"><path d="M1 1h16v16H1zM6 1v11h11" /></svg>
        <LayoutGrid size={18} strokeWidth={1} className="ml-[14px] shrink-0" />
        <BookOpen size={18} strokeWidth={1} className="ml-[13px] shrink-0" />
        <span className="ml-[29px] w-[37px] h-[30px] bg-[#7f7f7f] flex items-center justify-center shrink-0">
          <Play size={16} fill="#fafcfb" strokeWidth={0} />
        </span>
        <span className="ml-[6px] w-[8px] text-[8px] text-[#888]">▾</span>
        <svg viewBox="0 0 16 20" className="ml-[27px] w-[16px] h-[20px] shrink-0" fill="none" stroke="#333"><path d="M1 4V1h3M12 1h3v3M15 16v3h-3M4 19H1v-3M4 5h8v10H4z" /></svg>
        <span className="ml-[12px] w-[31px] text-[14px] text-[#555]">83%</span>
        <span className="ml-[4px] w-[8px] text-[8px] text-[#888]">▾</span>
        <Minus size={14} strokeWidth={2} className="ml-[12px] shrink-0" />
        <span className="ml-[15px] w-[60px] border-t border-[#333]" />
        <span className="w-[15px] h-[15px] rounded-full border border-[#333]" />
      </div>
      {/* taskbar */}
      <div className="relative h-[50px] shrink-0 flex items-center pl-[20px]">
        <svg viewBox="0 0 20 20" fill="#111" className="w-[20px] h-[20px]"><path d="M0 3l8-1v7H0zM9 2l11-2v9H9zM0 10h8v7l-8-1zM9 10h11v10L9 18z" /></svg>
        <Search size={30} strokeWidth={2.4} className="ml-[36px] -scale-x-100" />
        <span className="ml-[21px] mr-[18px] w-[3px] h-[26px] border-x border-[#666]" />
        {tray.map((t, i) => (
          <div key={i} className={`relative ${t.w} ${t.mr} h-[50px] flex items-center justify-center`}>
            {t.el}
            <span className="absolute left-0 right-0 bottom-0 h-[3px] bg-[#8a8a8a]" />
          </div>
        ))}
        <span className="flex-1" />
        <Cloud size={26} strokeWidth={1} className="text-[#aaa]" />
        <span className="ml-[12px] w-[70px] text-[19.5px] whitespace-nowrap">21°C 阴</span>
        <ChevronUp size={20} strokeWidth={1.2} className="ml-[27px]" />
        <Volume1 size={18} strokeWidth={1} className="ml-[7px]" />
        <span className="ml-[18px] w-[15px] text-[15px]">中</span>
        <span className="ml-[20px] w-[14px] text-[15px] font-bold text-[#999]">S</span>
        <div className="ml-[24px] w-[70px] text-[15px] leading-[24px] text-right mr-[82px]">
          <div className="pr-[11px]">20:57</div>
          <div>2023/5/2</div>
        </div>
        <span className="absolute right-[6px] bottom-[1px] bg-[#fafcfb]"><QrCode /></span>
      </div>
      <StudioWindow />
    </div>
  );
}
